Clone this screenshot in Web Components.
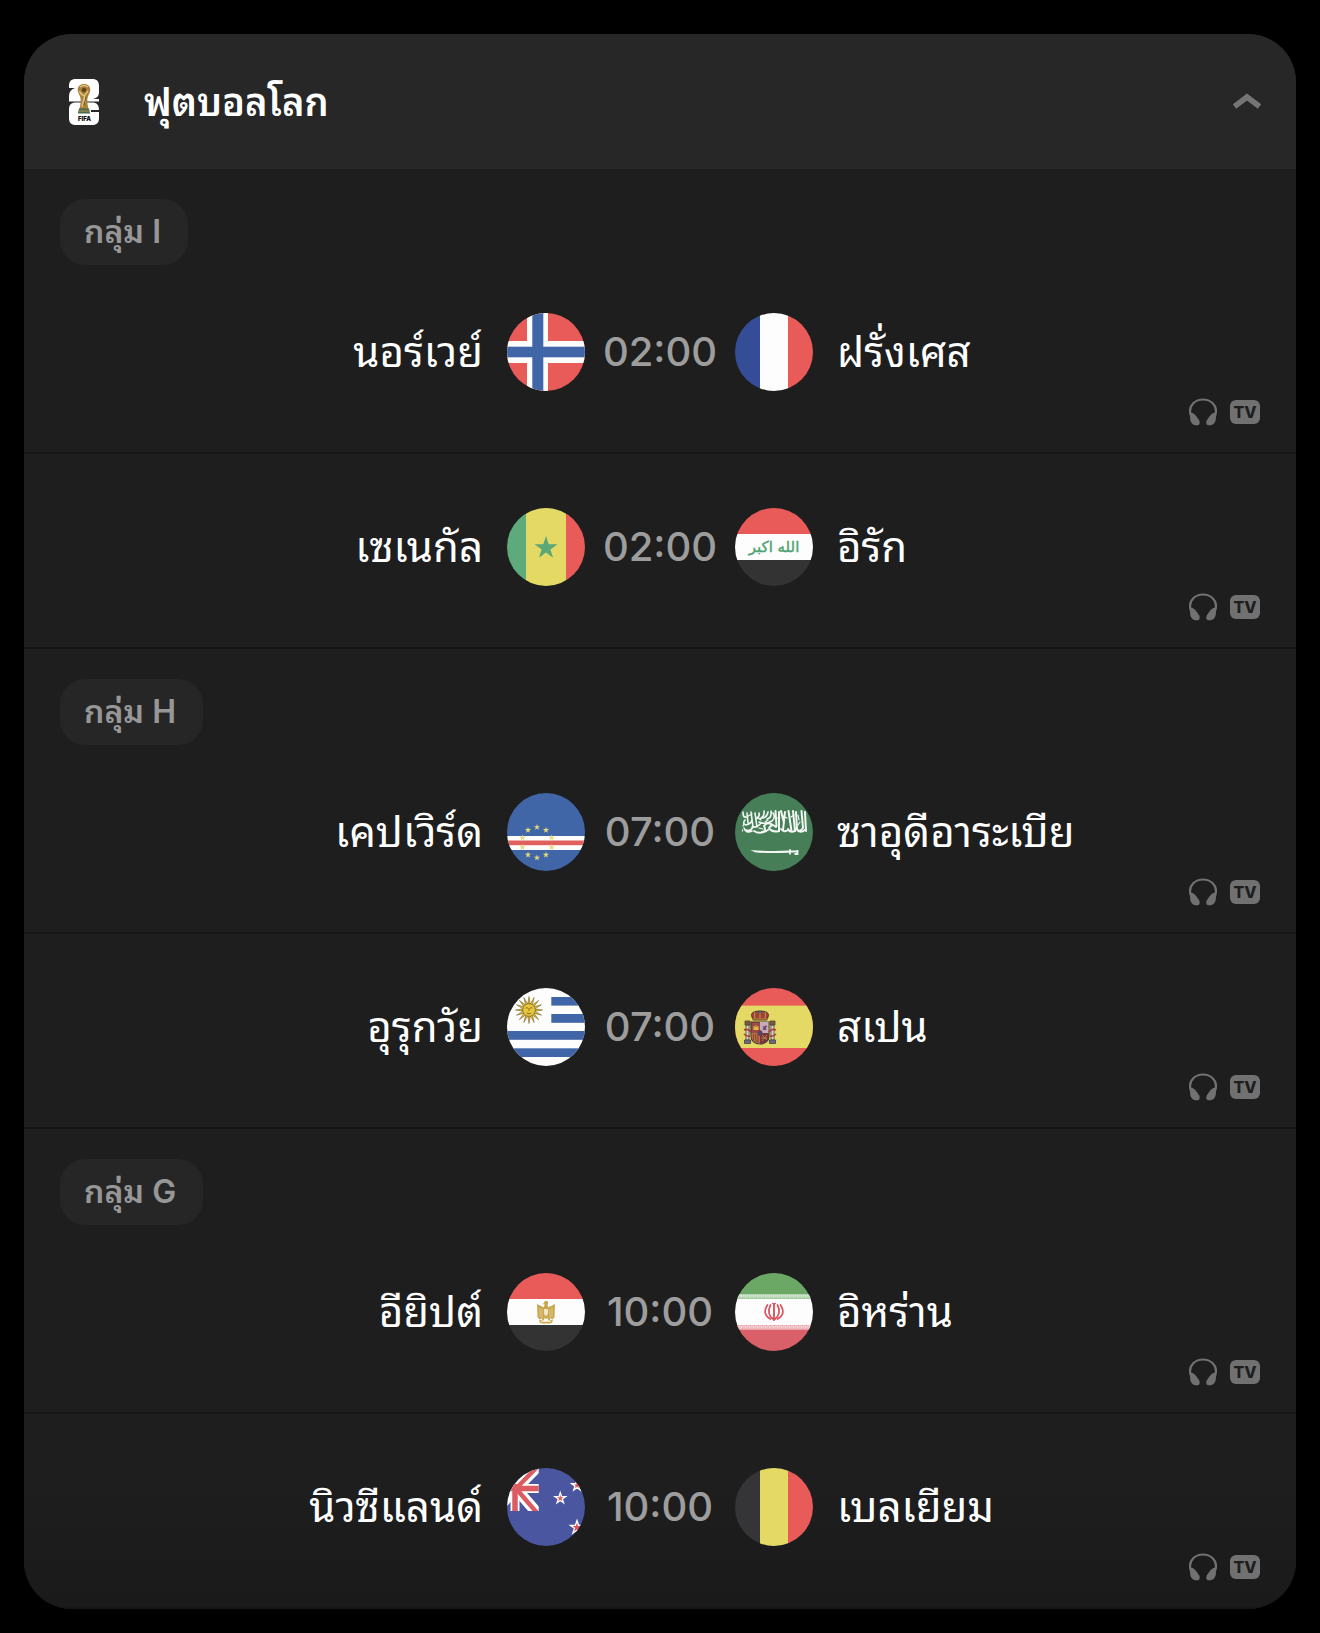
<!DOCTYPE html>
<html lang="th">
<head>
<meta charset="utf-8">
<meta name="viewport" content="width=device-width, initial-scale=1">
<title>ฟุตบอลโลก</title>
<style>
  html { background: #000; }
  body {
    margin: 0;
    padding: 34px 24px 24px;
    color: #fff;
    font-family: Inter, "Noto Sans Thai Looped", "Noto Looped Thai", Loma, Waree, Garuda, Umpush, "Noto Sans Thai", "Liberation Sans", sans-serif;
  }
</style>
</head>
<body>
<league-card heading="ฟุตบอลโลก">
  <match-group name="กลุ่ม I">
    <match-row time="02:00" home-flag="no" away-flag="fr"><span slot="home">นอร์เวย์</span><span slot="away">ฝรั่งเศส</span></match-row>
    <match-row time="02:00" home-flag="sn" away-flag="iq"><span slot="home">เซเนกัล</span><span slot="away">อิรัก</span></match-row>
  </match-group>
  <match-group name="กลุ่ม H">
    <match-row time="07:00" home-flag="cv" away-flag="sa"><span slot="home">เคปเวิร์ด</span><span slot="away">ซาอุดีอาระเบีย</span></match-row>
    <match-row time="07:00" home-flag="uy" away-flag="es"><span slot="home">อุรุกวัย</span><span slot="away">สเปน</span></match-row>
  </match-group>
  <match-group name="กลุ่ม G">
    <match-row time="10:00" home-flag="eg" away-flag="ir"><span slot="home">อียิปต์</span><span slot="away">อิหร่าน</span></match-row>
    <match-row time="10:00" home-flag="nz" away-flag="be"><span slot="home">นิวซีแลนด์</span><span slot="away">เบลเยียม</span></match-row>
  </match-group>
</league-card>

<script>
const RED = '#e85b58', YELLOW = '#e5d966', BLUE = '#4166a8', WHITE = '#fdfdfd', DARK = '#333333';

const rect = (x, y, w, h, fill) => `<rect x="${x}" y="${y}" width="${w}" height="${h}" fill="${fill}"/>`;
const polar = (cx, cy, r, deg) => {
  const a = deg * Math.PI / 180;
  return (cx + r * Math.cos(a)).toFixed(2) + ',' + (cy + r * Math.sin(a)).toFixed(2);
};
const star = (cx, cy, r, attrs) => {
  const pts = [];
  for (let i = 0; i < 10; i++) pts.push(polar(cx, cy, i % 2 ? r * 0.385 : r, -90 + i * 36));
  return `<polygon points="${pts.join(' ')}" ${attrs}/>`;
};

function capeVerdeStars() {
  let out = '';
  for (let i = 0; i < 10; i++) {
    const [x, y] = polar(30, 49.5, 15.3, -90 + i * 36).split(',').map(Number);
    out += star(x, y, 3.3, 'fill="#e6d978"');
  }
  return out;
}

function sunOfMay() {
  let rays = '';
  for (let i = 0; i < 16; i++) {
    const a = i * 22.5;
    rays += `<polygon points="${polar(22, 22, 13.5, a)} ${polar(22, 22, 6, a - 11)} ${polar(22, 22, 6, a + 11)}"/>`;
  }
  return `<g fill="#d9b93a" stroke="#7d6823" stroke-width=".6">${rays}<circle cx="22" cy="22" r="6.2" fill="#e8c93e"/></g>
    <g fill="none" stroke="#6b5418" stroke-width=".8"><path d="M18.6 20.2q1.3-1 2.5 0M23 20.2q1.3-1 2.5 0M22 20v3M19.7 25q2.3 1.6 4.6 0"/></g>`;
}

const spainArms = `
  <g>
    <path d="M17 29c-2-4 2-6 8-6s10 2 8 6l-1 3H18z" fill="#a04038" stroke="#4e3a2a" stroke-width="1"/>
    <path d="M25 22v8M20 24q-1 3 0 6M30 24q1 3 0 6M17 31h16" stroke="#b3943a" stroke-width="1.100" fill="none"/>
    <circle cx="25" cy="24" r="1.400" fill="#3c6d68"/>
    <path d="M16 34h18v14c0 5-4 8-9 8s-9-3-9-8z" fill="#9d4a46" stroke="#453a35" stroke-width="1.200"/>
    <path d="M25 34h8.500v11H25z" fill="#c3adbd"/>
    <path d="M16.500 45H25v10.500c-5 0-8.500-3-8.500-7.500z" fill="#a87b44"/>
    <path d="M18.500 46v6M20.800 46v8M23 46v9" stroke="#a13a3a" stroke-width="1.100"/>
    <path d="M25 45h8.500v3c0 4-3 7.500-8.500 7.500z" fill="#7c343e"/>
    <path d="M27 47l5 5M32 47l-5 6M26 50h6" stroke="#c19b42" stroke-width=".7"/>
    <path d="M18.500 42v-4h1v1h1v-2h1v2h1v-1h1v4z" fill="#dfb947"/>
    <path d="M27.500 42l1-2-1-2 2 .500 1.500-1.500 1 2-1.500 1 1 2z" fill="#6c4470"/>
    <ellipse cx="25" cy="45" rx="2.200" ry="2.600" fill="#3c4a7c" stroke="#933" stroke-width=".8"/>
    <g fill="#d8d5cc" stroke="#4c433d" stroke-width=".8">
      <path d="M11 37h3v15h-3zM36 37h3v15h-3z"/>
      <path d="M9.500 52h6v3.500h-6zM34.500 52h6v3.500h-6z" fill="#666d82"/>
      <path d="M10 33h5v4h-5zM35 33h5v4h-5z" fill="#7c5c34"/>
    </g>
    <path d="M9 42q4-2 7 2M9 46q3 3 6 2M41 42q-4-2-7 2M41 46q-3 3-6 2" stroke="#a63a3e" stroke-width="1.600" fill="none"/>
  </g>`;

const egyptEagle = `
  <g fill="#c9a84c">
    <path d="M30 31l6 3 1.500 5v7l-2 2-1-3-1.500 1.500-2.500-2z"/>
    <path d="M48 31l-6 3-1.500 5v7l2 2 1-3 1.500 1.500 2.500-2z"/>
    <path d="M37 30q0-2.200 2.200-2.200 2 0 2 2.200l-.700 2.500 2 3V43L39 46l-3.500-3v-7.500l2-3-.300-1.500-2 .300z"/>
    <path d="M32 46.500q7 3 14 0l-1 3.500q-6 1-12 0z"/>
  </g>
  <path d="M37 36h4v5l-2 2.500-2-2.500z" fill="#f1e6c4"/>
  <path d="M33 35v9M35 36v9M45 35v9M43 36v9" stroke="#f4ead0" stroke-width=".5"/>
  <path d="M34 48.500h10" stroke="#fbf6e6" stroke-width=".8"/>`;

const iranEmblem = `
  <g fill="none" stroke="#d9535c" stroke-linecap="round">
    <path d="M39 31.500V47" stroke-width="1.900"/>
    <path d="M35.500 32q-4.500 9 3 14.500M42.500 32q4.500 9-3 14.500" stroke-width="1.700"/>
    <path d="M32.500 32q-6 9 3 14M45.500 32q6 9-3 14" stroke-width="1.700"/>
    <path d="M37.500 30.300q1.500 1 3 0" stroke-width="1.200"/>
  </g>`;

const fret = (y, ground) => {
  let d = '';
  for (let x = 0; x < 78; x += 4) d += `M${x} ${y + 3.5}v-2.5h2.5v2.5M${x + 1.2} ${y + 3.5}v-1`;
  return rect(0, y, 78, 5, ground) + `<path d="${d}" stroke="#fff" stroke-width=".7" fill="none" opacity=".85"/>`;
};

/* Thuluth band of the Saudi flag, as interlaced pen strokes over a curved sword */
const saudiBand = `
  <g fill="none" stroke="#f2f7f3" stroke-linecap="round" stroke-linejoin="round">
    <path stroke-width="2" d="M70 19l1 19M66.500 18l1.500 17q-3 5-6 1l-1-17M58 18l2 20M53.500 18l3 20M50 19l-2 18M46 18l3 12M44 19v19M40.500 18l1 15"/>
    <path stroke-width="1.900" d="M70 37q-5 4-9-1M60 38q-5 2-7-2M53 37q-4 3-7-1M44 38q-7 2-10-3 3-5 7-1M38 32q-6-4-9 1 3 5-2 6M33 37q-8 5-14 1"/>
    <path stroke-width="1.600" d="M36 18q1 7-4 8M33 19q-1 5-5 6M29 18q1 5-4 8M24 20q1 4-3 6M38 20q3 4-1 8q-6 4-13 1M26 30q-4 5-9 4M20 20l2 14M16 19l2 15q-3 5-7 3M12 20l1 10M8 19q0 6 3 5M10 27q-3 4 1 5q5-1 6-5M9 35q2 6 8 3"/>
    <path stroke-width="1.200" d="M63 22l1 5M56 24l3-2M48 23l4 2M42 25h3M30 29l3-2M22 24l4 3M13 23l4-2M9 31l-1 2M7.500 37v1M65 29l-2 3M37 37l3 1M24 35l4 1"/>
  </g>
  <path d="M15.500 57q20 1.500 38.500.500v2.200q-22 1-34-.500z" fill="#f2f7f3"/>
  <path d="M54 58.500h8.500M55 56.200v5.400M62.500 57v4h-3" stroke="#f2f7f3" stroke-width="1.800" fill="none"/>`;

const unionCanton = `
  <svg x="0" y="0" width="31.700" height="43" viewBox="0 0 31.700 43">
    <g fill="none">
      <path d="M9 20.500L37 53M9 20.500L37-8M9 20.500L-19 50" stroke="#fff" stroke-width="11"/>
      <path d="M8 18v30M0 20.500h36" stroke="#fff" stroke-width="9"/>
      <path d="M9 20.500L37 53M9 20.500L37-8" stroke="#dc5c62" stroke-width="4.500"/>
      <path d="M8 16v32M0 20.500h36" stroke="#dc5c62" stroke-width="5.500"/>
    </g>
  </svg>`;
const nzStar = (x, y, r) => star(x, y, r, 'fill="#e0555b" stroke="#fff" stroke-width="1.300"');

const FLAGS = {
  no: ['Norway', rect(0, 0, 78, 78, RED) + rect(20, 0, 21, 78, WHITE) + rect(0, 28, 78, 22, WHITE) + rect(25.3, 0, 11, 78, BLUE) + rect(0, 33.7, 78, 10.6, BLUE)],
  fr: ['France', rect(0, 0, 25, 78, '#354d97') + rect(25, 0, 28, 78, WHITE) + rect(53, 0, 25, 78, RED)],
  sn: ['Senegal', rect(0, 0, 19, 78, '#5faa7a') + rect(19, 0, 40, 78, YELLOW) + rect(59, 0, 19, 78, RED) + star(39, 40, 12, 'fill="#5aa878"')],
  iq: ['Iraq', rect(0, 0, 78, 26, RED) + rect(0, 26, 78, 26, WHITE) + rect(0, 52, 78, 26, DARK)
    + '<text x="39" y="44" text-anchor="middle" direction="rtl" font-family="DejaVu Sans, sans-serif" font-size="15" fill="#4ea36f" stroke="#4ea36f" stroke-width=".4">الله اكبر</text>'],
  cv: ['Cape Verde', rect(0, 0, 78, 78, BLUE) + rect(0, 43, 78, 14, WHITE) + rect(0, 47.5, 78, 4.7, '#e0605c') + capeVerdeStars()],
  sa: ['Saudi Arabia', rect(0, 0, 78, 78, '#467f57') + saudiBand],
  uy: ['Uruguay', rect(0, 0, 78, 78, WHITE) + rect(44.3, 9, 34, 8.6, BLUE) + rect(44.3, 26, 34, 8.8, BLUE) + rect(0, 43, 78, 8.8, BLUE) + rect(0, 60.3, 78, 8.7, BLUE) + sunOfMay()],
  es: ['Spain', rect(0, 0, 78, 78, RED) + rect(0, 17.6, 78, 42.4, YELLOW) + spainArms],
  eg: ['Egypt', rect(0, 0, 78, 26, RED) + rect(0, 26, 78, 26, WHITE) + rect(0, 52, 78, 26, DARK) + egyptEagle],
  ir: ['Iran', rect(0, 0, 78, 21, '#6ba765') + rect(0, 21, 78, 36, WHITE) + rect(0, 57, 78, 21, '#d95f68') + fret(21, '#a5cba1') + fret(52, '#e9a3a8') + iranEmblem],
  nz: ['New Zealand', rect(0, 0, 78, 78, '#4a569f') + unionCanton + nzStar(53.3, 30.3, 5.6) + nzStar(70, 17.5, 5.6) + nzStar(70, 59.5, 7)],
  be: ['Belgium', rect(0, 0, 25, 78, '#353537') + rect(25, 0, 28, 78, YELLOW) + rect(53, 0, 25, 78, RED)]
};

class NationFlag extends HTMLElement {
  connectedCallback() {
    if (this.shadowRoot) return;
    const [label, art] = FLAGS[this.getAttribute('code')];
    this.attachShadow({ mode: 'open' }).innerHTML = `
      <style>
        :host { display: block; width: 78px; height: 78px; border-radius: 50%; overflow: hidden; }
        svg { display: block; }
      </style>
      <svg viewBox="0 0 78 78" role="img" aria-label="${label}">${art}</svg>`;
  }
}

class BroadcastIcons extends HTMLElement {
  connectedCallback() {
    if (this.shadowRoot) return;
    this.attachShadow({ mode: 'open' }).innerHTML = `
      <style>
        :host { display: flex; justify-content: flex-end; align-items: center; gap: 13px; height: 28px; color: #717171; }
        svg { display: block; }
        .tv {
          width: 30px; height: 24px; border-radius: 6px; background: currentColor;
          display: flex; align-items: center; justify-content: center;
        }
        .tv span { color: #1e1e1e; font: 800 16px/24px Inter, sans-serif; }
      </style>
      <svg width="28" height="28" viewBox="0 0 28 28" aria-hidden="true">
        <path d="M2.500 19C0 13.500 1 8.500 4.500 5 9.500.300 18.500.300 23.500 5 27 8.500 28 13.500 25.500 19" fill="none" stroke="currentColor" stroke-width="2.200"/>
        <path d="M.800 14.500C5 14.500 7 17.500 10 22 11.500 25 10.500 27.300 8 27.300 4 27.300 2 25.500 1.200 21.500zM27.200 14.500C23 14.500 21 17.500 18 22 16.500 25 17.500 27.300 20 27.300 24 27.300 26 25.500 26.800 21.500z" fill="currentColor"/>
      </svg>
      <div class="tv"><span>TV</span></div>`;
  }
}

class MatchRow extends HTMLElement {
  connectedCallback() {
    if (this.shadowRoot) return;
    const time = this.getAttribute('time');
    this.attachShadow({ mode: 'open' }).innerHTML = `
      <style>
        :host { display: block; padding: 54px 36px 26px; border-bottom: 2px solid #161616; }
        :host(:first-child) { padding-top: 48px; }
        .match { display: grid; grid-template-columns: minmax(0, 1fr) 78px 150px 78px minmax(0, 1fr); align-items: center; height: 78px; }
        .team { font-size: 42px; line-height: 60px; white-space: nowrap; padding: 0 24px; }
        .home { text-align: right; }
        time { text-align: center; font-size: 40px; line-height: 60px; font-weight: 500; color: #9d9d9d; }
        broadcast-icons { margin-top: 7px; }
      </style>
      <div class="match">
        <div class="team home"><slot name="home"></slot></div>
        <nation-flag code="${this.getAttribute('home-flag')}"></nation-flag>
        <time datetime="${time}">${time}</time>
        <nation-flag code="${this.getAttribute('away-flag')}"></nation-flag>
        <div class="team"><slot name="away"></slot></div>
      </div>
      <broadcast-icons></broadcast-icons>`;
  }
}

class MatchGroup extends HTMLElement {
  connectedCallback() {
    if (this.shadowRoot) return;
    this.attachShadow({ mode: 'open' }).innerHTML = `
      <style>
        :host { display: block; padding-top: 30px; }
        h3 {
          width: fit-content; margin: 0 36px; padding: 0 27px 0 24px; border-radius: 25px;
          background: #262626; color: #979797; font-size: 32px; line-height: 66px; height: 66px; font-weight: 600;
        }
      </style>
      <h3>${this.getAttribute('name')}</h3>
      <slot></slot>`;
  }
}

class TrophyLogo extends HTMLElement {
  connectedCallback() {
    if (this.shadowRoot) return;
    this.attachShadow({ mode: 'open' }).innerHTML = `
      <style>:host { display: block; } svg { display: block; }</style>
      <svg width="30" height="46" viewBox="0 0 30 46" role="img" aria-label="FIFA World Cup 26">
        <path d="M7 0h16c5 0 7 2.500 7 7v6c0 4-2 6-6 7h6v2.500H0V17c0-4 2-6.500 6-8H0V7c0-4.500 2-7 7-7z" fill="#fff"/>
        <path d="M7 23.500h16c5 0 7 2.500 7 7.500h-8v2h8v6c0 4.500-2 7-7 7H7c-5 0-7-2.500-7-7v-8.500c0-4.500 2-7 7-7z" fill="#fff"/>
        <path d="M15 5c4 0 6.300 2.500 6.300 6 0 3-2.300 5-2.800 8-.500 3 0 7 1 11h-9c1-4 1.500-8 1-11-.500-3-2.800-5-2.800-8C8.700 7.500 11 5 15 5z" fill="#a8803a"/>
        <path d="M11 8q4-3 8 0M10.500 12q1.500 4 3.500 4t2 8M19 12q-3 3-4 7t-2 9" fill="none" stroke="#e4c682" stroke-width="1.300"/>
        <path d="M14 9l3 1-1 3-3-1zM17 18l-2 8" fill="#5e421c" stroke="#5e421c" stroke-width=".8"/>
        <path d="M10 29.500h10l1.200 5H8.800z" fill="#4b6b45"/>
        <path d="M9.500 32h11" stroke="#b1975a" stroke-width="1"/>
        <text x="15.500" y="41.500" text-anchor="middle" font-family="Inter, sans-serif" font-weight="900" font-size="6" fill="#111">FIFA</text>
      </svg>`;
  }
}

class LeagueCard extends HTMLElement {
  connectedCallback() {
    if (this.shadowRoot) return;
    const root = this.attachShadow({ mode: 'open' });
    root.innerHTML = `
      <style>
        :host { display: block; border-radius: 48px; overflow: hidden; background: #1e1e1e; }
        h2 { margin: 0; font: inherit; }
        button {
          display: flex; align-items: center; width: 100%; height: 135px; box-sizing: border-box;
          margin: 0; padding: 0 34px 0 45px; border: 0; background: #272727; color: #fff;
          font-family: inherit; font-size: 38px; line-height: 56px; font-weight: 600; text-align: left; cursor: pointer;
        }
        .title { flex: 1; margin-left: 45px; }
        .chevron { display: block; }
        button[aria-expanded="false"] .chevron { transform: rotate(180deg); }
        .body { padding-bottom: 2px; overflow: hidden; background: linear-gradient(#1e1e1e calc(100% - 130px), #1a1a1a); }
        .body[hidden] { display: none; }
        ::slotted(match-group:last-child) { margin-bottom: -2px; }
      </style>
      <h2><button type="button" aria-expanded="true" aria-controls="matches">
        <trophy-logo></trophy-logo>
        <span class="title">${this.getAttribute('heading')}</span>
        <svg class="chevron" width="30" height="17" viewBox="0 0 30 17" aria-hidden="true"><path d="M2.500 13.500L15 4 27.500 13.500" fill="none" stroke="#757575" stroke-width="5.500"/></svg>
      </button></h2>
      <div class="body" id="matches"><slot></slot></div>`;
    const button = root.querySelector('button');
    const body = root.querySelector('.body');
    button.addEventListener('click', () => {
      body.hidden = !body.hidden;
      button.setAttribute('aria-expanded', String(!body.hidden));
    });
  }
}

customElements.define('nation-flag', NationFlag);
customElements.define('broadcast-icons', BroadcastIcons);
customElements.define('trophy-logo', TrophyLogo);
customElements.define('match-row', MatchRow);
customElements.define('match-group', MatchGroup);
customElements.define('league-card', LeagueCard);
</script>
</body>
</html>
